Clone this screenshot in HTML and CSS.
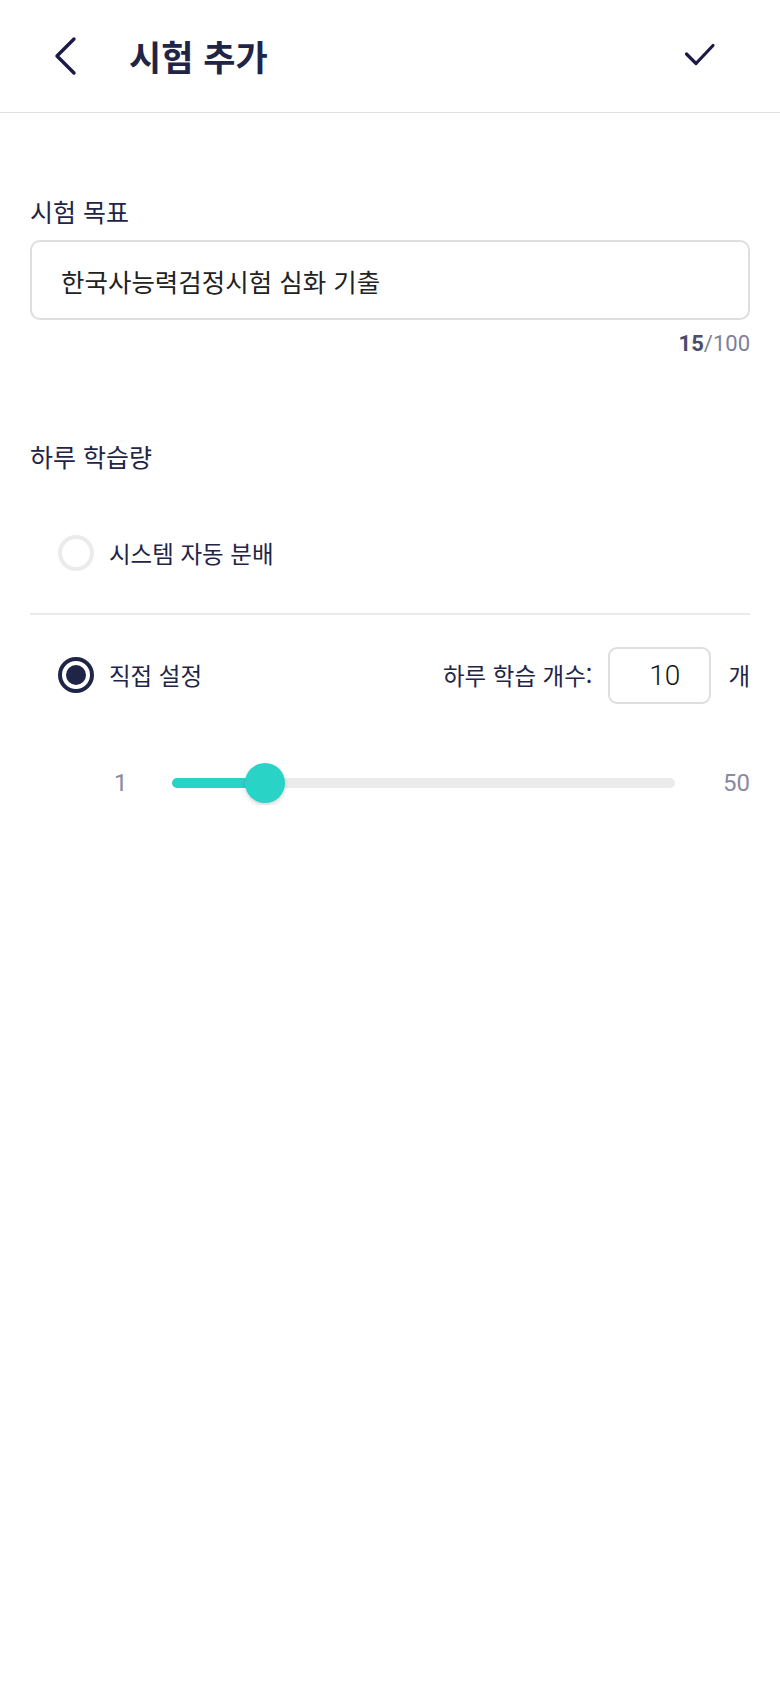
FILE: index.html
```html
<!DOCTYPE html>
<html lang="ko">
<head>
  <meta charset="UTF-8">
  <title>시험 추가</title>
  <link rel="stylesheet" href="styles.css">
</head>
<body>

<header class="topbar">
  <svg class="back" width="24" height="40" viewBox="0 0 24 40">
    <path d="M21 3 L4 20 L21 37" fill="none" stroke="#1b1a44" stroke-width="3.4" stroke-linecap="round" stroke-linejoin="round"/>
  </svg>
  <h1 class="title">시험 추가</h1>
  <svg class="done" width="32" height="26" viewBox="0 0 32 26">
    <path d="M2.5 11 L12 20.5 L29 2.5" fill="none" stroke="#1b1a44" stroke-width="3.2" stroke-linecap="round" stroke-linejoin="round"/>
  </svg>
</header>

<main class="content">
  <!-- 시험 목표 -->
  <div class="field-label goal-label">시험 목표</div>
  <div class="text-box">한국사능력검정시험 심화 기출</div>
  <div class="counter"><b>15</b>/100</div>

  <!-- 하루 학습량 -->
  <div class="field-label amount-label">하루 학습량</div>

  <div class="radio-row first">
    <span class="radio"></span>
    <span class="radio-text">시스템 자동 분배</span>
  </div>
  <div class="divider"></div>

  <div class="radio-row second">
    <span class="radio checked"></span>
    <span class="radio-text">직접 설정</span>
    <div class="count-group">
      <span class="count-label">하루 학습 개수:</span>
      <div class="count-box">10</div>
      <span class="count-unit">개</span>
    </div>
  </div>

  <div class="slider-row">
    <span class="slider-min">1</span>
    <div class="track">
      <div class="fill" style="width: 18.4%"></div>
      <div class="thumb" style="left: 18.4%"></div>
    </div>
    <span class="slider-max">50</span>
  </div>
</main>

</body>
</html>
```

FILE: styles.css
```css
body {
  margin: 0;
  background: #ffffff;
  font-family: "Noto Sans CJK KR", "Noto Sans", sans-serif;
  color: #1f2547;
}
.topbar {
  height: 112px;
  display: flex;
  align-items: center;
  padding: 0 64px 0 53px;
  border-bottom: 1px solid #e0e0e0;
}
.back {
  display: block;
}
.title {
  margin: 0 0 0 52px;
  font-size: 35px;
  font-weight: 700;
  line-height: 40px;
  color: #1f2547;
}
.done {
  display: block;
  margin-left: auto;
}
.content {
  padding: 0 30px;
}
.field-label {
  font-size: 25px;
  font-weight: 400;
  line-height: 32px;
}
.goal-label {
  margin-top: 82px;
}
.text-box {
  margin-top: 13px;
  height: 76px;
  border: 2px solid #dedede;
  border-radius: 10px;
  padding-left: 29px;
  display: flex;
  align-items: center;
  font-size: 25.5px;
  color: #222222;
}
.counter {
  margin-top: 10px;
  text-align: right;
  font-family: Roboto, sans-serif;
  font-size: 22px;
  line-height: 28px;
  color: #7d7f99;
}
.counter b {
  color: #4b4d68;
  font-weight: 700;
}
.amount-label {
  margin-top: 82px;
}
.radio-row {
  height: 60px;
  display: flex;
  align-items: center;
  padding-left: 28px;
}
.radio-row.first {
  margin-top: 51px;
}
.radio-row.second {
  margin-top: 30px;
}
.radio {
  width: 36px;
  height: 36px;
  box-sizing: border-box;
  border: 4px solid #ebebeb;
  border-radius: 50%;
  display: flex;
  align-items: center;
  justify-content: center;
}
.radio.checked {
  border-color: #1f2547;
}
.radio.checked::after {
  content: "";
  width: 20px;
  height: 20px;
  border-radius: 50%;
  background: #1f2547;
}
.radio-text {
  margin-left: 15px;
  font-size: 23.5px;
}
.divider {
  margin-top: 30px;
  height: 2px;
  background: #ebebeb;
}
.count-group {
  margin-left: auto;
  display: flex;
  align-items: center;
}
.count-label {
  font-size: 23.5px;
}
.count-box {
  margin-left: 16px;
  width: 103px;
  height: 57px;
  box-sizing: border-box;
  border: 2px solid #dedede;
  border-radius: 9px;
  display: flex;
  align-items: center;
  justify-content: flex-end;
  padding-right: 29px;
  font-family: Roboto, sans-serif;
  font-size: 28px;
  font-weight: 300;
  color: #111111;
}
.count-unit {
  margin-left: 17px;
  font-size: 23.5px;
}
.slider-row {
  margin-top: 56px;
  height: 44px;
  display: flex;
  align-items: center;
  font-family: Roboto, sans-serif;
  font-size: 24px;
  color: #878aa3;
}
.slider-min {
  margin-left: 84px;
  width: 15px;
}
.track {
  position: relative;
  flex: 1;
  height: 10px;
  margin: 0 48px 0 43px;
  background: #ebebeb;
  border-radius: 5px;
}
.fill {
  height: 100%;
  background: #29d4c7;
  border-radius: 5px;
}
.thumb {
  position: absolute;
  top: 50%;
  width: 40px;
  height: 40px;
  margin: -20px 0 0 -20px;
  border-radius: 50%;
  background: #29d4c7;
  box-shadow: 0 2px 4px rgba(0, 0, 0, 0.18);
}
```
